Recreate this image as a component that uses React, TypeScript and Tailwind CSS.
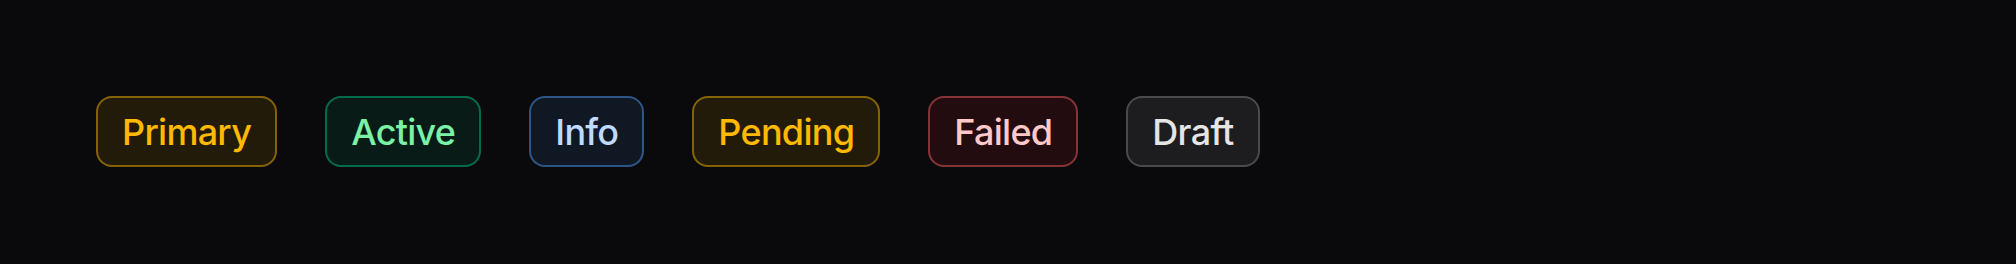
import React from 'react';

type Tone = 'primary' | 'active' | 'info' | 'pending' | 'failed' | 'draft';

const toneClasses: Record<Tone, string> = {
  primary: 'border-amber-400/45 bg-amber-400/10 text-amber-400',
  active: 'border-emerald-500/50 bg-emerald-500/10 text-green-300',
  info: 'border-blue-400/45 bg-blue-400/10 text-blue-200',
  pending: 'border-amber-400/45 bg-amber-400/10 text-amber-400',
  failed: 'border-red-400/45 bg-red-500/10 text-red-200',
  draft: 'border-white/20 bg-white/[0.08] text-neutral-200',
};

const badges: { label: string; tone: Tone }[] = [
  { label: 'Primary', tone: 'primary' },
  { label: 'Active', tone: 'active' },
  { label: 'Info', tone: 'info' },
  { label: 'Pending', tone: 'pending' },
  { label: 'Failed', tone: 'failed' },
  { label: 'Draft', tone: 'draft' },
];

const Badge: React.FC<{ label: string; tone: Tone }> = ({ label, tone }) => (
  <span className={`inline-flex items-center rounded-2xl border-2 px-6 py-[13.5px] text-4xl leading-10 font-medium tracking-[-0.02em] ${toneClasses[tone]}`}>
    {label}
  </span>
);

export default function App() {
  return (
    <div className="h-[264px] w-full bg-[#0a0a0c] p-24 font-['Inter',sans-serif]">
      <div className="flex items-center gap-12">
        {badges.map((b) => (
          <Badge key={b.label} label={b.label} tone={b.tone} />
        ))}
      </div>
    </div>
  );
}
